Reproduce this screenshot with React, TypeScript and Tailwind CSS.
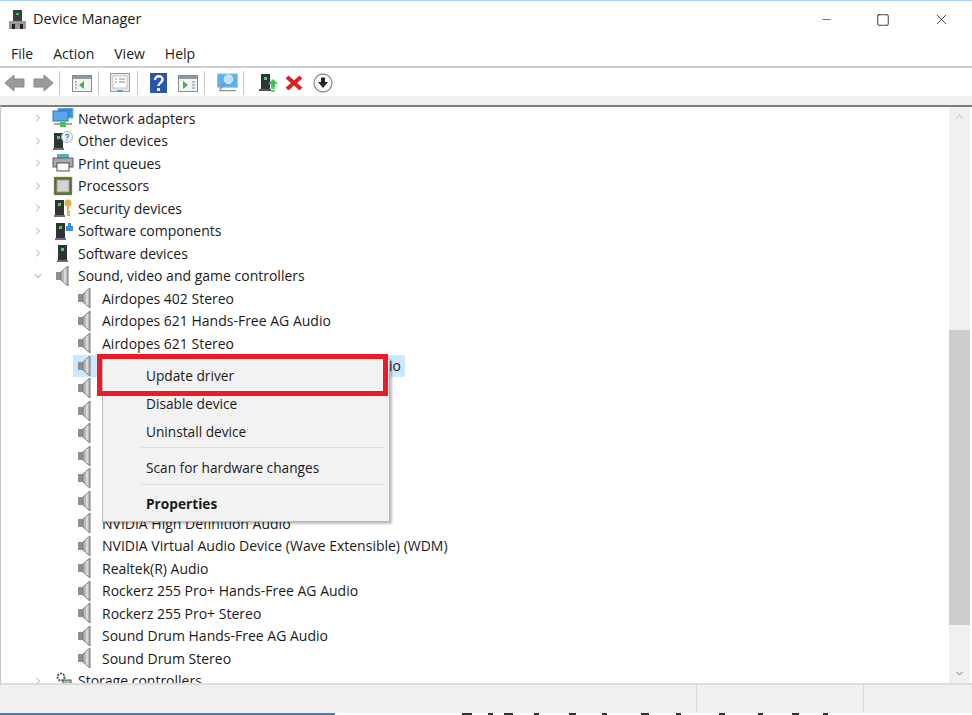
import { ChevronDown, ChevronRight, ChevronUp, Minus, Square, X } from 'lucide-react';

const font = { fontFamily: '"Open Sans", sans-serif' };

function Speaker() {
    return (
        <svg width="16" height="22" viewBox="0 0 16 22">
            <rect x="1" y="7" width="5" height="8" fill="#8f8f8f" />
            <path d="M6 7 L13 1 V21 L6 15 Z" fill="#b9b9b9" stroke="#777" strokeWidth="1" />
            <path d="M10 4 V18" stroke="#e4e4e4" strokeWidth="1.5" />
        </svg>
    );
}

function Tower({ x = 5 }: { x?: number }) {
    return (
        <g>
            <rect x={x} y="2" width="9" height="15" fill="#2f3437" />
            <rect x={x + 3} y="5" width="3" height="3" fill="#3ddc4a" />
            <rect x={x - 1} y="17" width="11" height="2" fill="#6d6d6d" />
        </g>
    );
}

function RowIcon({ name }: { name: string }) {
    if (name === 'network') {
        return (
            <svg width="22" height="20" viewBox="0 0 22 20">
                <rect x="6" y="0" width="15" height="10" fill="#3d8fd8" stroke="#7bb6e8" />
                <rect x="1" y="3" width="15" height="10" fill="#5aa6e6" stroke="#2f77bb" />
                <path d="M2 16 H20" stroke="#a8a8a8" strokeWidth="2" />
                <path d="M8 14 H14 V19 H8 Z" fill="#49c25a" />
            </svg>
        );
    }
    if (name === 'other') {
        return (
            <svg width="22" height="20" viewBox="0 0 22 20">
                <Tower x={2} />
                <circle cx="15" cy="6" r="5.5" fill="#f2f2f2" stroke="#b5b5b5" />
                <path d="M13.5 4.5 C14 2.8 17 3 16.5 5 C16.2 6 15 6 15 7.5 M15 8.5 V9.5" stroke="#3d7fc4" strokeWidth="1.1" fill="none" />
            </svg>
        );
    }
    if (name === 'print') {
        return (
            <svg width="22" height="20" viewBox="0 0 22 20">
                <rect x="5" y="1" width="12" height="5" fill="#5aa6e6" />
                <path d="M7 3 H15" stroke="#49c25a" strokeWidth="1.5" />
                <rect x="1" y="5" width="20" height="9" fill="#a9a9a9" stroke="#5e5e5e" />
                <rect x="5" y="10" width="12" height="8" fill="#fafafa" stroke="#4e4e4e" />
            </svg>
        );
    }
    if (name === 'cpu') {
        return (
            <svg width="20" height="20" viewBox="0 0 20 20">
                <rect x="1" y="1" width="18" height="18" fill="#56703c" stroke="#b99c4e" strokeDasharray="1 1" />
                <rect x="4" y="4" width="12" height="12" fill="#d4d4d4" stroke="#9a9a9a" />
            </svg>
        );
    }
    if (name === 'security') {
        return (
            <svg width="22" height="20" viewBox="0 0 22 20">
                <Tower x={3} />
                <circle cx="16" cy="5" r="3.5" fill="#e5ab4b" />
                <path d="M16 8 V18 M16 14 H18 M16 17 H18" stroke="#e5ab4b" strokeWidth="1.8" />
            </svg>
        );
    }
    if (name === 'components') {
        return (
            <svg width="22" height="20" viewBox="0 0 22 20">
                <Tower x={4} />
                <path d="M14 5 H16 V2 H19 V5 H21 V10 H14 Z" fill="#3d8fd8" />
            </svg>
        );
    }
    if (name === 'software') {
        return (
            <svg width="22" height="20" viewBox="0 0 22 20">
                <Tower x={6} />
            </svg>
        );
    }
    return <Speaker />;
}

const categoriesTop = [
    { icon: 'network', label: 'Network adapters' },
    { icon: 'other', label: 'Other devices' },
    { icon: 'print', label: 'Print queues' },
    { icon: 'cpu', label: 'Processors' },
    { icon: 'security', label: 'Security devices' },
    { icon: 'components', label: 'Software components' },
    { icon: 'software', label: 'Software devices' },
];

// rows behind the context menu show no readable label in the screenshot
const devices = [
    'Airdopes 402 Stereo',
    'Airdopes 621 Hands-Free AG Audio',
    'Airdopes 621 Stereo',
    'selected',
    '',
    '',
    '',
    '',
    '',
    '',
    'NVIDIA High Definition Audio',
    'NVIDIA Virtual Audio Device (Wave Extensible) (WDM)',
    'Realtek(R) Audio',
    'Rockerz 255 Pro+ Hands-Free AG Audio',
    'Rockerz 255 Pro+ Stereo',
    'Sound Drum Hands-Free AG Audio',
    'Sound Drum Stereo',
];

// the very top of a page behind the window pokes out at the bottom edge
const bottomTicks = [
    { gap: 462, w: 10 }, { gap: 16, w: 5 }, { gap: 11, w: 9 }, { gap: 21, w: 5 }, { gap: 30, w: 7 },
    { gap: 26, w: 5 }, { gap: 34, w: 8 }, { gap: 27, w: 5 }, { gap: 38, w: 6 }, { gap: 33, w: 5 },
    { gap: 29, w: 7 }, { gap: 24, w: 5 },
];

function ToolbarIcons() {
    return (
        <div className="flex h-full items-center pl-[4px] pt-[2px]">
            <svg width="50" height="20" viewBox="0 0 50 20">
                <path d="M1 10 L10 2 V6 H20 V14 H10 V18 Z" fill="#9a9a9a" stroke="#8a8a8a" />
                <path d="M49 10 L40 2 V6 H30 V14 H40 V18 Z" fill="#9a9a9a" stroke="#8a8a8a" />
            </svg>
            <div className="ml-[5px] h-[24px] w-px bg-[#c8c8c8]" />
            <svg className="ml-[12px]" width="20" height="17" viewBox="0 0 20 17">
                <rect x="0.5" y="0.5" width="19" height="16" fill="#f4f4f4" stroke="#8c8c8c" />
                <rect x="1" y="1" width="18" height="3" fill="#8c9aa3" />
                <path d="M12 6 V14 L7 10 Z" fill="#39b54a" />
                <path d="M3 7 H5 M3 10 H5 M3 13 H5" stroke="#5b8fb9" />
            </svg>
            <div className="ml-[6px] h-[24px] w-px bg-[#c8c8c8]" />
            <svg className="ml-[11px]" width="20" height="20" viewBox="0 0 20 20">
                <rect x="0.5" y="0.5" width="19" height="18" fill="#e9e9e9" stroke="#9a9a9a" />
                <rect x="3" y="3" width="14" height="12" fill="#fff" stroke="#c4c4c4" />
                <path d="M5 6 H7 M9 6 H15 M5 9 H7 M9 9 H15" stroke="#7d8a94" />
                <rect x="7" y="17" width="6" height="2" fill="#4aa3e0" />
            </svg>
            <div className="ml-[7px] h-[24px] w-px bg-[#c8c8c8]" />
            <svg className="ml-[12px]" width="17" height="20" viewBox="0 0 17 20">
                <rect width="17" height="20" fill="#2a56a8" />
                <path d="M5 7 C5 2 13 2 12.5 7 C12 10 8.5 10 8.5 13" stroke="#fff" strokeWidth="2.4" fill="none" />
                <rect x="7" y="15" width="3" height="3" fill="#fff" />
            </svg>
            <svg className="ml-[11px]" width="20" height="17" viewBox="0 0 20 17">
                <rect x="0.5" y="0.5" width="19" height="16" fill="#f4f4f4" stroke="#8c8c8c" />
                <rect x="1" y="1" width="18" height="3" fill="#8c9aa3" />
                <path d="M5 6 V14 L10 10 Z" fill="#39b54a" />
                <path d="M14 7 H17 M14 10 H17 M14 13 H17" stroke="#5b8fb9" />
            </svg>
            <div className="ml-[6px] h-[24px] w-px bg-[#c8c8c8]" />
            <svg className="ml-[12px]" width="21" height="20" viewBox="0 0 22 20">
                <rect x="0.5" y="0.5" width="21" height="14" fill="#5cb0ec" stroke="#8fc8f0" />
                <circle cx="12" cy="6" r="4.5" fill="#bfe0f6" stroke="#e8f4fc" />
                <path d="M8 10 L3 17 M2 18 H20" stroke="#8e8e8e" strokeWidth="1.5" />
            </svg>
            <div className="ml-[5px] h-[24px] w-px bg-[#c8c8c8]" />
            <svg className="ml-[15px]" width="20" height="20" viewBox="0 0 20 20">
                <rect x="2" y="1" width="9" height="15" fill="#2f3437" />
                <rect x="5" y="4" width="3" height="3" fill="#3ddc4a" />
                <rect x="0" y="16" width="12" height="2" fill="#555" />
                <path d="M14 6 L19 11 H16 V14 H12 V11 H9 Z" fill="#3cc552" />
                <path d="M12 15 H16 M12 18 H16" stroke="#3cc552" strokeWidth="1.5" />
            </svg>
            <svg className="ml-[6px]" width="18" height="18" viewBox="0 0 18 18">
                <path d="M2 3 L16 15 M16 3 L2 15" stroke="#e01f1f" strokeWidth="4" />
            </svg>
            <svg className="ml-[10px]" width="20" height="20" viewBox="0 0 20 20">
                <circle cx="10" cy="10" r="9" fill="#fafafa" stroke="#8e8e8e" strokeWidth="1.3" />
                <path d="M8 4.5 H12 V9 H15 L10 15 L5 9 H8 Z" fill="#222" />
            </svg>
        </div>
    );
}

export default function App() {
    return (
        <div className="relative flex h-[715px] w-[972px] flex-col overflow-hidden bg-white text-[#1a1a1a]" style={font}>
            <div className="h-px shrink-0 bg-[#a9d0f5]" />

            {/* Title bar */}
            <div className="flex h-[37px] shrink-0 items-center pl-[9px]">
                <svg width="17" height="20" viewBox="0 0 17 20">
                    <rect x="4" y="0" width="9" height="11" fill="#3a3f42" />
                    <rect x="7" y="3" width="3" height="2" fill="#39c24d" />
                    <rect x="0" y="11" width="17" height="8" fill="#9a9a9a" />
                    <rect x="3" y="14" width="3" height="5" fill="#222" />
                    <rect x="11" y="14" width="3" height="5" fill="#222" />
                </svg>
                <span className="ml-[7px] text-[14.5px] leading-none">Device Manager</span>
                <div className="ml-auto flex items-center">
                    <Minus size={13} strokeWidth={1} className="mr-[43px] text-black" />
                    <Square size={14} strokeWidth={1.3} className="mr-[43px] text-black" />
                    <X size={17} strokeWidth={1} className="mr-[22px] text-black" />
                </div>
            </div>

            {/* Menu */}
            <div className="flex h-[30px] shrink-0 items-center gap-[20px] border-b-2 border-[#c9ced1] pl-[11px] pt-[2px] text-[14px]">
                <span>File</span>
                <span>Action</span>
                <span>View</span>
                <span>Help</span>
            </div>

            {/* Toolbar */}
            <div className="h-[28px] shrink-0">
                <ToolbarIcons />
            </div>

            <div className="h-[9px] shrink-0 bg-[#f0f0f0]" />

            {/* Tree */}
            <div className="flex h-[580px] shrink-0 border-y-2 border-t-[#7d7d7d] border-b-[#dcdcdc] border-l border-l-[#c8c8c8] pr-[2px]">
                <div className="min-w-0 flex-1 overflow-hidden text-[14px]">
                    <div className="pl-[31px]">
                        {categoriesTop.map((c) => (
                            <div key={c.label} className="flex h-[22.5px] items-center">
                                <ChevronRight size={12} strokeWidth={1.5} className="text-[#888]" />
                                <span className="ml-[8px] flex w-[22px] justify-center">
                                    <RowIcon name={c.icon} />
                                </span>
                                <span className="ml-[4px]">{c.label}</span>
                            </div>
                        ))}
                        <div className="flex h-[22.5px] items-center">
                            <ChevronDown size={12} strokeWidth={1.5} className="text-[#666]" />
                            <span className="ml-[8px] flex w-[22px] justify-center">
                                <Speaker />
                            </span>
                            <span className="ml-[4px]">Sound, video and game controllers</span>
                        </div>
                        {devices.map((d, i) => (
                            <div key={i} className="ml-[41px] flex h-[22.5px] items-center">
                                {d === 'selected' ? (
                                    <span className="flex h-full w-[332px] items-center justify-between bg-[#cce8ff] pl-[1px] pr-[4px]">
                                        <span className="flex w-[22px] justify-center">
                                            <Speaker />
                                        </span>
                                        <span>io</span>
                                    </span>
                                ) : (
                                    <span className="flex h-full items-center pl-[1px]">
                                        <span className="flex w-[22px] justify-center">
                                            <Speaker />
                                        </span>
                                        <span className="ml-[6px] whitespace-nowrap">{d}</span>
                                    </span>
                                )}
                            </div>
                        ))}
                        <div className="flex h-[22.5px] items-center">
                            <ChevronRight size={12} strokeWidth={1.5} className="text-[#888]" />
                            <span className="ml-[8px] flex w-[22px] justify-center">
                                <svg width="20" height="20" viewBox="0 0 20 20">
                                    <circle cx="8" cy="6" r="3.5" fill="none" stroke="#555" strokeWidth="2" strokeDasharray="2 1" />
                                    <rect x="10" y="9" width="8" height="5" fill="#9bc7a2" stroke="#555" />
                                </svg>
                            </span>
                            <span className="ml-[4px]">Storage controllers</span>
                        </div>
                    </div>
                </div>

                {/* Scrollbar */}
                <div className="flex w-[21px] shrink-0 flex-col bg-[#f0f0f0]">
                    <div className="flex h-[19px] items-center justify-center">
                        <ChevronUp size={11} strokeWidth={1.5} className="text-[#999]" />
                    </div>
                    <div className="mt-[204px] h-[295px] bg-[#cdcdcd]" />
                    <div className="mt-auto flex h-[19px] items-center justify-center">
                        <ChevronDown size={11} strokeWidth={2} className="text-[#606060]" />
                    </div>
                </div>
            </div>

            {/* Status bar */}
            <div className="flex h-[28px] shrink-0 justify-end bg-[#f0f0f0]">
                <div className="w-[167px] border-l border-[#dadada]" />
                <div className="w-[109px] border-l border-[#dadada]" />
            </div>

            {/* Edge of what lies behind the window */}
            <div className="flex h-[2px] shrink-0">
                <div className="h-full w-[335px] bg-[#4a7ab0]" />
                <div className="ml-[-335px] flex h-full">
                    {bottomTicks.map((t, i) => (
                        <div key={i} className="h-full bg-[#333]" style={{ marginLeft: t.gap, width: t.w }} />
                    ))}
                </div>
            </div>

            {/* Context menu */}
            <div className="absolute left-[102px] top-[358px] flex h-[164px] w-[288px] flex-col border border-[#b8b8b8] bg-[#f2f2f2] pt-[3px] text-[13.7px] shadow-[2px_2px_2px_rgba(0,0,0,0.25)]">
                <div className="flex h-[28px] items-center pl-[43px]">Update driver</div>
                <div className="flex h-[28px] items-center pl-[43px]">Disable device</div>
                <div className="flex h-[28px] items-center pl-[43px]">Uninstall device</div>
                <div className="ml-[38px] mr-[5px] mt-px h-px bg-[#dfdfdf]" />
                <div className="flex h-[36px] items-center pl-[43px] pt-[4px]">Scan for hardware changes</div>
                <div className="ml-[38px] mr-[5px] h-px bg-[#dfdfdf]" />
                <div className="flex h-[36px] items-center pl-[43px] pt-[2px] font-bold">Properties</div>
            </div>

            {/* Red highlight */}
            <div className="absolute left-[97px] top-[354px] h-[42px] w-[291px] border-[5px] border-[#ed1c24]" />
        </div>
    );
}
